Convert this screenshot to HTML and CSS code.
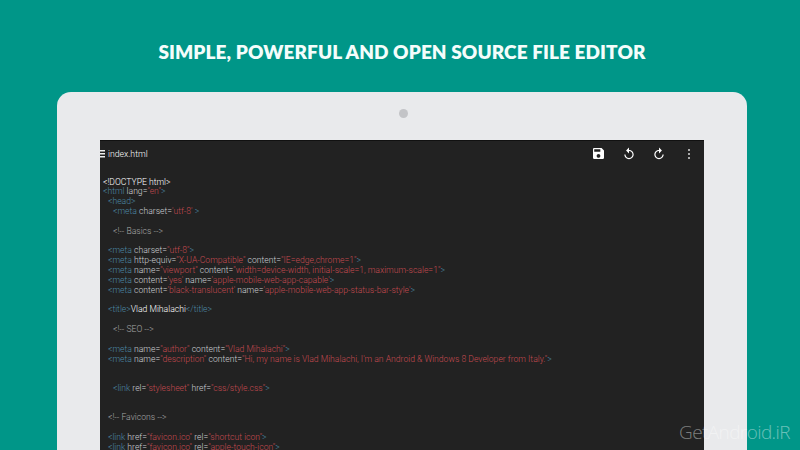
FILE: index.html
```html
<!DOCTYPE html>
<html lang="en">
<head>
<meta charset="utf-8">
<title>File editor</title>
<link rel="stylesheet" href="styles.css">
</head>
<body>
<div class="page">
  <h1 class="headline">SIMPLE, POWERFUL AND OPEN SOURCE FILE EDITOR</h1>
  <div class="tablet">
    <div class="camera"></div>
    <div class="screen">
      <div class="toolbar">
        <div class="menu"><i></i><i></i><i></i></div>
        <div class="file">index.html</div>
        <svg class="icon save" viewBox="3 3 18 18"><path d="M17 3H5c-1.11 0-2 .9-2 2v14c0 1.1.89 2 2 2h14c1.1 0 2-.9 2-2V7l-4-4zm-5 16c-1.66 0-3-1.34-3-3s1.34-3 3-3 3 1.34 3 3-1.34 3-3 3zm3-10H5V5h10v4z"/></svg>
        <svg class="icon arrow" viewBox="0 0 24 24"><path d="M12 5V1L7 6l5 5V7c3.31 0 6 2.69 6 6s-2.69 6-6 6-6-2.69-6-6H4c0 4.42 3.58 8 8 8s8-3.58 8-8-3.58-8-8-8z"/></svg>
        <svg class="icon arrow" viewBox="0 0 24 24"><path d="M12 5V1l5 5-5 5V7c-3.31 0-6 2.69-6 6s2.69 6 6 6 6-2.69 6-6h2c0 4.42-3.58 8-8 8s-8-3.58-8-8 3.58-8 8-8z"/></svg>
        <div class="dots"><i></i><i></i><i></i></div>
      </div>
      <div class="code">
        <div class="ln"><b>&lt;!DOCTYPE html&gt;</b></div>
        <div class="ln"><u>&lt;html</u> lang=<s>"en"</s><u>&gt;</u></div>
        <div class="ln i1"><u>&lt;head&gt;</u></div>
        <div class="ln i2"><u>&lt;meta</u> charset=<s>'utf-8'</s> <u>&gt;</u></div>
        <div class="ln"></div>
        <div class="ln i2"><em>&lt;!-- Basics --&gt;</em></div>
        <div class="ln"></div>
        <div class="ln i1"><u>&lt;meta</u> charset=<s>"utf-8"</s><u>&gt;</u></div>
        <div class="ln i1"><u>&lt;meta</u> http-equiv=<s>"X-UA-Compatible"</s> content=<s>"IE=edge,chrome=1"</s><u>&gt;</u></div>
        <div class="ln i1"><u>&lt;meta</u> name=<s>"viewport"</s> content=<s>"width=device-width, initial-scale=1, maximum-scale=1"</s><u>&gt;</u></div>
        <div class="ln i1"><u>&lt;meta</u> content=<s>'yes'</s> name=<s>'apple-mobile-web-app-capable'</s><u>&gt;</u></div>
        <div class="ln i1"><u>&lt;meta</u> content=<s>'black-translucent'</s> name=<s>'apple-mobile-web-app-status-bar-style'</s><u>&gt;</u></div>
        <div class="ln"></div>
        <div class="ln i1"><u>&lt;title&gt;</u><b>Vlad Mihalachi</b><u>&lt;/title&gt;</u></div>
        <div class="ln"></div>
        <div class="ln i2"><em>&lt;!-- SEO --&gt;</em></div>
        <div class="ln"></div>
        <div class="ln i1"><u>&lt;meta</u> name=<s>"author"</s> content=<s>"Vlad Mihalachi"</s><u>&gt;</u></div>
        <div class="ln i1"><u>&lt;meta</u> name=<s>"description"</s> content=<s>"Hi, my name is Vlad Mihalachi, I'm an Android &amp; Windows 8 Developer from Italy."</s><u>&gt;</u></div>
        <div class="ln"></div>
        <div class="ln"></div>
        <div class="ln i2"><u>&lt;link</u> rel=<s>"stylesheet"</s> href=<s>"css/style.css"</s><u>&gt;</u></div>
        <div class="ln"></div>
        <div class="ln"></div>
        <div class="ln i1"><em>&lt;!-- Favicons --&gt;</em></div>
        <div class="ln"></div>
        <div class="ln i1"><u>&lt;link</u> href=<s>"favicon.ico"</s> rel=<s>"shortcut icon"</s><u>&gt;</u></div>
        <div class="ln i1"><u>&lt;link</u> href=<s>"favicon.ico"</s> rel=<s>"apple-touch-icon"</s><u>&gt;</u></div>
      </div>
    </div>
  </div>
  <div class="watermark">GetAndroid.iR</div>
</div>
</body>
</html>
```
FILE: styles.css
```css
* { box-sizing: border-box; }
html, body { margin: 0; padding: 0; }
body { width: 800px; height: 450px; overflow: hidden; background: #009688; }
.page { position: relative; width: 800px; height: 450px; overflow: hidden; display: flex; flex-direction: column; }
.headline {
  margin: 0; height: 92px; padding: 40px 0 0 4px; text-align: center;
  font: 800 19px/24px Lato, sans-serif; letter-spacing: 0.1px; color: #f4fdfb; white-space: nowrap;
}
.tablet {
  flex: 1; margin: 0 53px 0 57px; padding: 17px 43px 0;
  background: #e9eaec; border-radius: 14px 14px 0 0;
  display: flex; flex-direction: column; min-height: 0;
}
.camera { width: 9px; height: 9px; border-radius: 50%; background: #c3c4c7; align-self: center; margin: 0 0 22px 2px; }
.screen { flex: 1; width: 604px; background: #222222; border-top: 1px solid #111; overflow: hidden; }
.toolbar { height: 25px; display: flex; align-items: center; color: #fff; }
.menu { width: 5px; display: flex; flex-direction: column; gap: 2px; margin-right: 3px; }
.menu i { display: block; height: 1px; background: #eee; box-shadow: 0 1px 0 #888; }
.file { font: 300 8.7px/12px Roboto, sans-serif; color: #fff; flex: 1; }
.icon { fill: #fff; display: block; }
.save { width: 11px; height: 11px; margin-right: 18px; }
.arrow { width: 14px; height: 14px; margin-right: 16px; }
.arrow + .arrow { margin-right: 0; }
.dots { display: flex; flex-direction: column; gap: 2px; margin: 0 14px 0 22px; }
.dots i { display: block; width: 2px; height: 2px; background: #aaa; }
.code { padding: 11.6px 0 0 3px; font: 300 8.62px/9.83px Roboto, sans-serif; color: #cdd0d4; white-space: nowrap; }
.ln { height: 9.83px; }
.i1 { padding-left: 5px; }
.i2 { padding-left: 10px; }
.code b { font-weight: 300; color: #ffffff; }
.code u { text-decoration: none; color: #4d89a6; }
.code s { text-decoration: none; color: #c44a50; }
.code em { font-style: normal; color: #a6a6a6; }
.watermark {
  position: absolute; left: 679px; top: 418.5px;
  font: 300 19px/26px "Open Sans", sans-serif; letter-spacing: -0.6px; color: rgba(255,255,255,.42); white-space: nowrap;
}
```
